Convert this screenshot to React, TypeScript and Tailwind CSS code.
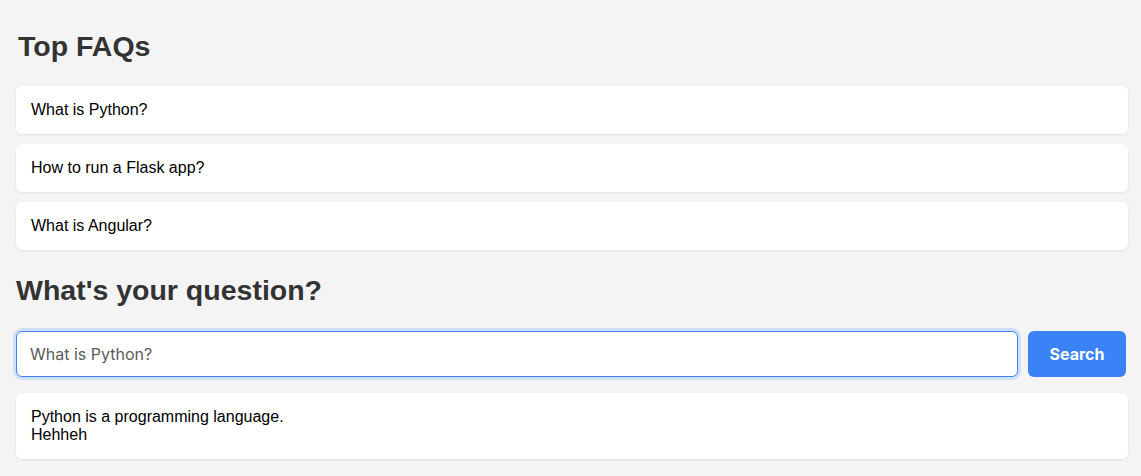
import React from 'react';

const faqs = ['What is Python?', 'How to run a Flask app?', 'What is Angular?'];

const App: React.FC = () => {
  return (
    <div className="min-h-screen bg-[#f4f4f4] pl-4 pr-[13px] pt-[30px] pb-4 font-['Liberation_Sans',Arial,sans-serif]">
      <h1 className="text-[28.5px] leading-[32px] font-bold text-[#333] pl-[2px]">Top FAQs</h1>

      <div className="mt-[24px] flex flex-col gap-[10px]">
        {faqs.map((q) => (
          <div
            key={q}
            className="bg-white rounded-[6px] shadow-[0_1px_3px_rgba(0,0,0,0.08)] px-[15px] py-[15px] text-[16px] leading-[18px] text-black"
          >
            {q}
          </div>
        ))}
      </div>

      <h2 className="mt-[24px] text-[28.5px] leading-[32px] font-bold text-[#333]">What's your question?</h2>

      <div className="mt-[25px] flex gap-[10px] pr-[2px]">
        <input
          type="text"
          placeholder="What is Python?"
          className="flex-1 h-[46px] rounded-[6px] border border-[#3b82f6] bg-white px-[13px] text-[16px] font-['Inter',sans-serif] text-[#333] placeholder:text-[#5b5b5b] outline-none ring-[3px] ring-[#cfe0fd]"
        />
        <button className="w-[98px] h-[46px] rounded-[6px] bg-[#3b82f6] text-white font-bold text-[16px] font-['Inter',sans-serif]">
          Search
        </button>
      </div>

      <div className="mt-[16px] bg-white rounded-[6px] shadow-[0_1px_3px_rgba(0,0,0,0.08)] p-[15px] text-[16px] leading-[18px] text-black">
        Python is a programming language.
        <br />
        Hehheh
      </div>
    </div>
  );
};

export default App;
